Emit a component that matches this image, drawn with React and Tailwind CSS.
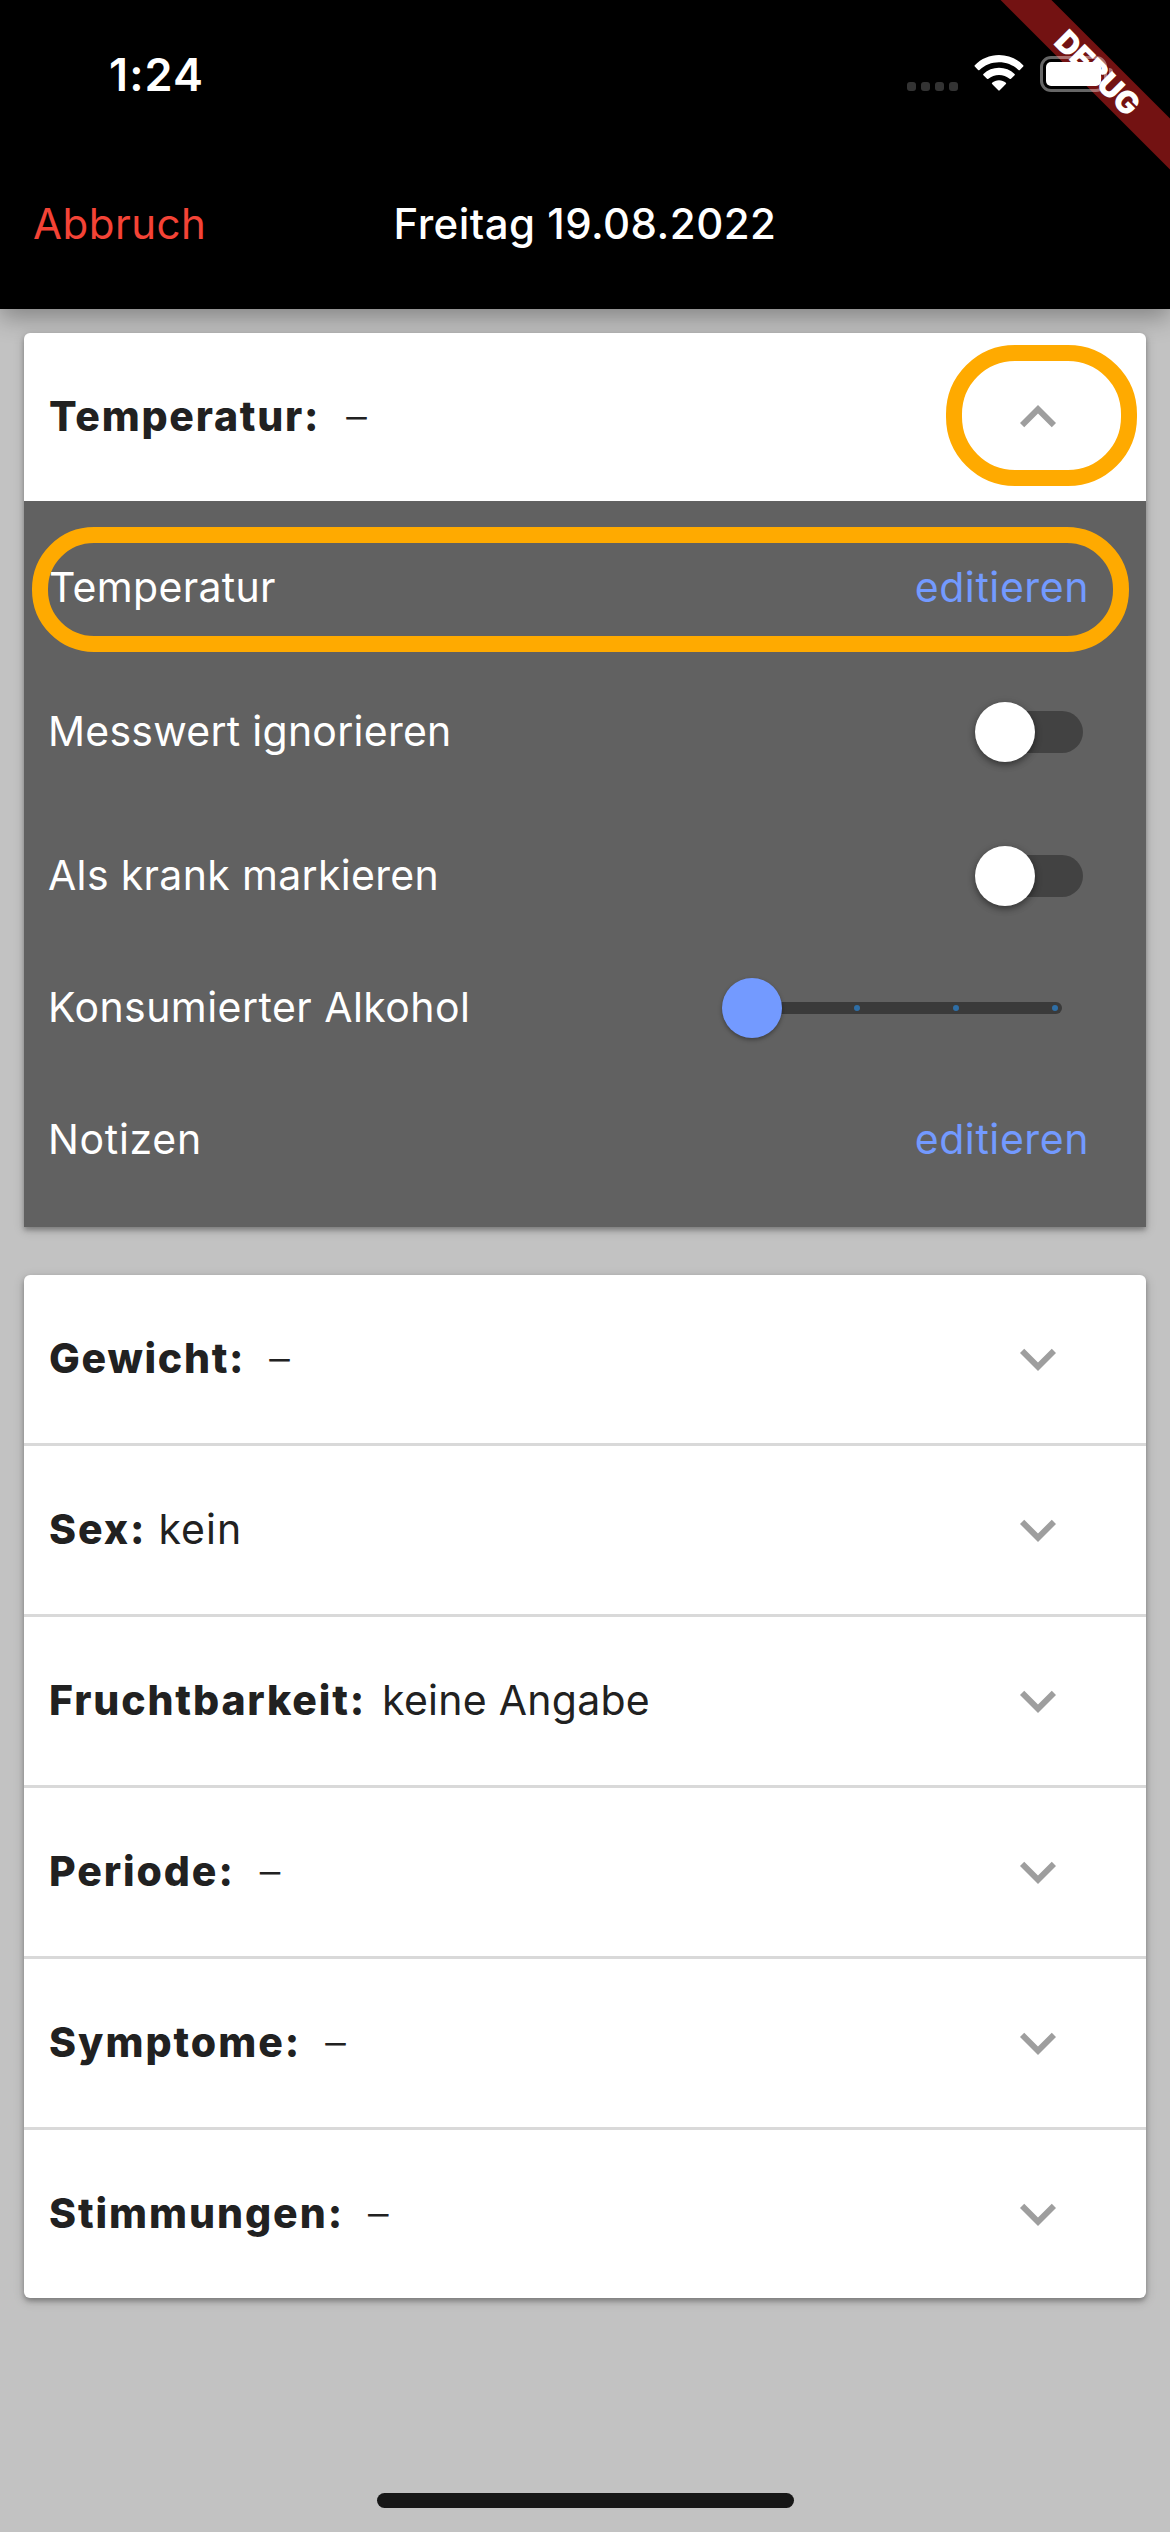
const sections = [
  { label: "Gewicht:", value: "–", labelClass: "ml-px tracking-[1.7px]", valueClass: "ml-[24px] font-light" },
  { label: "Sex:", value: "kein", labelClass: "ml-px tracking-[1.91px]", valueClass: "ml-[12px] tracking-[1.1px]" },
  { label: "Fruchtbarkeit:", value: "keine Angabe", labelClass: "ml-px tracking-[1.85px]", valueClass: "ml-[16px] tracking-[0.27px]" },
  { label: "Periode:", value: "–", labelClass: "ml-px tracking-[1.9px]", valueClass: "ml-[25px] font-light" },
  { label: "Symptome:", value: "–", labelClass: "ml-px tracking-[2px]", valueClass: "ml-[24px] font-light" },
  { label: "Stimmungen:", value: "–", labelClass: "ml-px tracking-[1.93px]", valueClass: "ml-[24px] font-light" },
];

const CHEVRON_DOWN = "M16.59 8.59 12 13.17 7.41 8.59 6 10l6 6 6-6z";
const CHEVRON_UP = "m12 8-6 6 1.41 1.41L12 10.83l4.59 4.58L18 14z";

function SectionHeader({ label, value, labelClass, valueClass, open }) {
  return (
    <div className="flex h-[168px] items-center pl-6 pr-[72px]">
      <div className="relative -top-px flex flex-1 items-center whitespace-pre leading-none text-[#212121]">
        <span className={`font-extrabold ${labelClass}`}>{label}</span>
        <span className={valueClass}>{value}</span>
      </div>
      <svg viewBox="0 0 24 24" className="size-[72px] fill-[#9e9e9e]">
        <path d={open ? CHEVRON_UP : CHEVRON_DOWN} />
      </svg>
    </div>
  );
}

function SettingRow({ label, labelClass, className, children }) {
  return (
    <div className={`flex items-center justify-between ${className}`}>
      <span className={`relative -top-px whitespace-pre leading-none text-white ${labelClass}`}>{label}</span>
      {children}
    </div>
  );
}

function EditLink() {
  return <button className="relative -top-px mr-[57px] tracking-[0.58px] leading-none text-[#739aff]">editieren</button>;
}

function Switch() {
  return (
    <div className="mr-[63px] flex h-[42px] w-[99px] items-center rounded-full bg-[#424242]">
      <div className="-ml-[9px] size-[60px] shrink-0 rounded-full bg-white shadow-[0_3px_6px_rgba(0,0,0,0.35),0_2px_10px_rgba(0,0,0,0.15)]" />
    </div>
  );
}

function Slider() {
  return (
    <div className="relative mr-[84px] flex h-3 w-[316px] items-center rounded-full bg-[#3a3a3a] pr-1">
      <div className="-ml-6 size-[60px] shrink-0 rounded-full bg-[#739aff] shadow-[0_2px_4px_rgba(0,0,0,0.35)]" />
      <div className="ml-[72px] flex flex-1 justify-between">
        <i className="size-1.5 rounded-full bg-[#2e6ea6]" />
        <i className="size-1.5 rounded-full bg-[#2e6ea6]" />
        <i className="size-1.5 rounded-full bg-[#2e6ea6]" />
      </div>
    </div>
  );
}

function StatusBar() {
  return (
    <div className="flex h-[141px] items-start justify-between pl-[109px] pr-[57px]">
      <span className="mt-[52px] text-[45px] font-semibold leading-none tracking-[1.1px] text-white">1:24</span>
      <div className="relative z-20 mt-[55px] flex items-start">
        <div className="mr-[16px] mt-[27px] flex gap-[5px]">
          <i className="size-[9px] rounded-[3px] bg-[#333]" />
          <i className="size-[9px] rounded-[3px] bg-[#333]" />
          <i className="size-[9px] rounded-[3px] bg-[#333]" />
          <i className="size-[9px] rounded-[3px] bg-[#333]" />
        </div>
        <svg viewBox="0 0 50 36" className="h-[36px] w-[50px] fill-white">
          <path d="M25 0C34.200 0 42.800 3.700 49.200 10.200Q49.800 10.900 49.200 11.600L45.900 15Q45.200 15.600 44.500 15C39.200 10 32.300 7.300 25 7.300S10.800 10 5.500 15Q4.800 15.600 4.100 15L.8 11.600Q.2 10.900 .8 10.200C7.200 3.700 15.800 0 25 0Z" />
          <path d="M25 12.700C30.900 12.700 36.400 14.900 40.600 18.900Q41.300 19.600 40.600 20.300L37 23.800Q36.300 24.400 35.600 23.800C32.700 21.300 29 19.900 25 19.900S17.300 21.300 14.400 23.800Q13.700 24.400 13 23.800L9.400 20.300Q8.700 19.600 9.400 18.900C13.600 14.900 19.100 12.700 25 12.700Z" />
          <path d="M25 25.300C27.600 25.300 30 26.200 31.900 27.800Q32.500 28.400 31.900 29.100L25.700 35.300Q25 36 24.300 35.300L18.100 29.100Q17.500 28.400 18.100 27.800C20 26.200 22.400 25.300 25 25.300Z" />
        </svg>
        <div className="ml-[16px] mt-px flex h-[36px] items-center">
          <div className="h-[36px] w-[67px] rounded-[11px] border-[3px] border-white/40 p-[3px]">
            <div className="h-full w-full rounded-[5px] bg-white" />
          </div>
          <div className="ml-[2px] h-3 w-1 rounded-r-full bg-white/40" />
        </div>
      </div>
    </div>
  );
}

function DebugBanner() {
  return (
    <div className="absolute right-0 top-0 z-10 size-[180px] overflow-hidden">
      <div className="absolute left-[-42px] top-[54px] flex h-[36px] w-[300px] rotate-45 items-center justify-center bg-[#731212]">
        <span className="text-[31px] font-black leading-none tracking-[-0.6px] text-white">DEBUG</span>
      </div>
    </div>
  );
}

export default function App() {
  return (
    <div className="relative flex h-[2532px] w-[1170px] flex-col overflow-hidden bg-[#c2c2c2] font-[Inter,sans-serif] text-[41px]">
      <header className="h-[309px] shrink-0 bg-black shadow-[0_8px_24px_rgba(0,0,0,0.33)]">
        <StatusBar />
        <DebugBanner />
        <div className="grid h-[168px] grid-cols-[1fr_auto_1fr] items-center text-[42px] leading-none">
          <button className="relative -top-px ml-[33px] justify-self-start tracking-[0.49px] text-[#f44336]">Abbruch</button>
          <h1 className="relative -top-px font-medium tracking-[0.47px] text-white">Freitag 19.08.2022</h1>
        </div>
      </header>

      <main className="flex flex-col gap-12 px-6 pt-6">
        <section className="relative rounded-t-[6px] bg-white shadow-[0_3px_5px_rgba(0,0,0,0.28),0_3px_12px_rgba(0,0,0,0.16)]">
          <SectionHeader label="Temperatur:" value="–" labelClass="ml-px tracking-[1.76px]" valueClass="ml-[26px] font-light" open />
          <div className="h-[726px] bg-[#616161] pl-6 pt-[15px]">
            <SettingRow label="Temperatur" labelClass="ml-px tracking-[0.31px]" className="h-[144px]">
              <EditLink />
            </SettingRow>
            <SettingRow label="Messwert ignorieren" labelClass="tracking-[0.26px]" className="h-[144px]">
              <Switch />
            </SettingRow>
            <SettingRow label="Als krank markieren" labelClass="tracking-[0.33px]" className="h-[144px]">
              <Switch />
            </SettingRow>
            <SettingRow label="Konsumierter Alkohol" labelClass="tracking-[0.45px]" className="h-[120px]">
              <Slider />
            </SettingRow>
            <SettingRow label="Notizen" labelClass="tracking-[0.7px]" className="h-[144px]">
              <EditLink />
            </SettingRow>
          </div>
          <div className="absolute left-[922px] top-[12px] h-[141px] w-[191px] rounded-[69px] border-[16px] border-[#ffaa00]" />
          <div className="absolute left-[8px] top-[194px] h-[125px] w-[1097px] rounded-[62px] border-[16px] border-[#ffaa00]" />
        </section>

        <section className="divide-y-3 divide-[#d9d9d9] rounded-[6px] bg-white shadow-[0_3px_5px_rgba(0,0,0,0.28),0_3px_12px_rgba(0,0,0,0.16)]">
          {sections.map((s) => (
            <div key={s.label}>
              <SectionHeader {...s} />
            </div>
          ))}
        </section>
      </main>

      <div className="mb-6 mt-auto h-[15px] w-[417px] self-center rounded-full bg-[#171717]" />
    </div>
  );
}
